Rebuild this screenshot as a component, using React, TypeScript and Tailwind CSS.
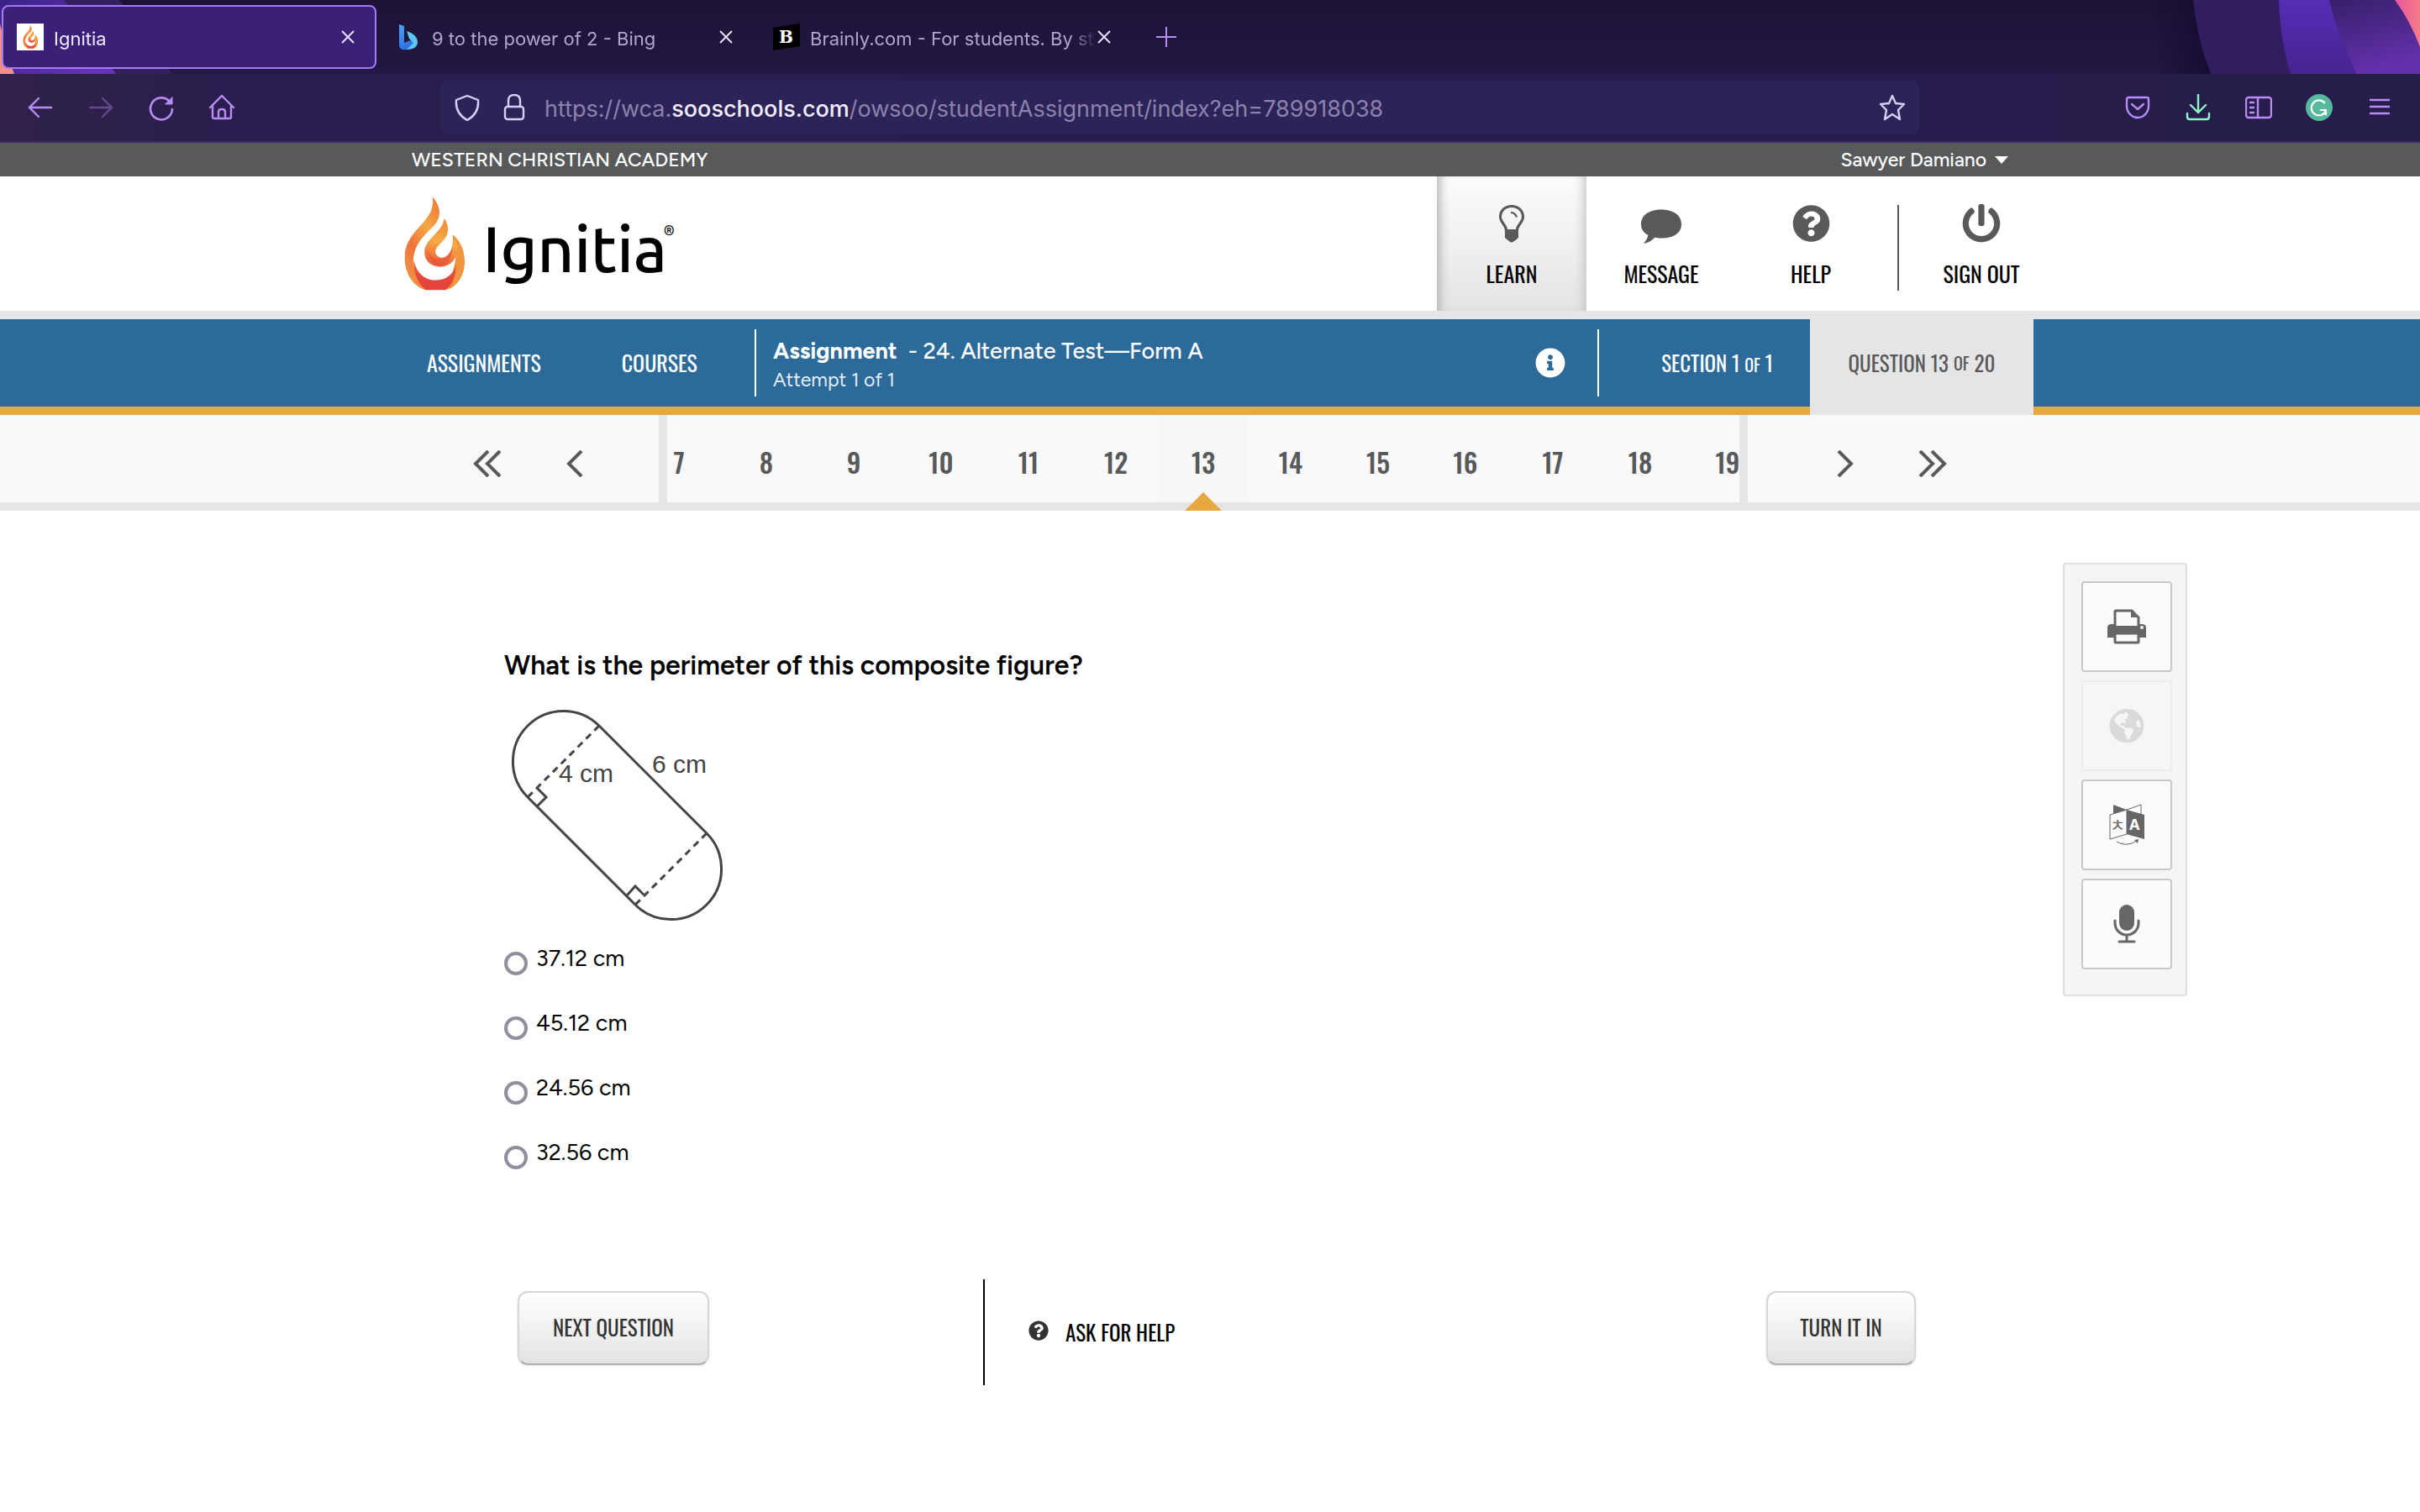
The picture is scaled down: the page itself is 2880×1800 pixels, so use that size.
import React from "react";
import { FaInfoCircle, FaPowerOff, FaQuestionCircle, FaGlobeAmericas } from "react-icons/fa";

const pages = [7, 8, 9, 10, 11, 12, 13, 14, 15, 16, 17, 18, 19];
const current = 13;
const answers = ["37.12 cm", "45.12 cm", "24.56 cm", "32.56 cm"];

function Flame({ id, className }: { id: string; className: string }) {
  return (
    <svg viewBox="30 45 222 334" className={className} aria-hidden="true">
      <defs>
        <linearGradient id={`${id}-a`} x1="0.8" y1="0" x2="0.2" y2="1">
          <stop offset="0" stopColor="#ef7f38" />
          <stop offset="0.3" stopColor="#f6a845" />
          <stop offset="0.65" stopColor="#ee743c" />
          <stop offset="1" stopColor="#f09a44" />
        </linearGradient>
        <linearGradient id={`${id}-b`} x1="0" y1="0" x2="0" y2="1">
          <stop offset="0" stopColor="#ef6c3a" />
          <stop offset="0.6" stopColor="#e6453a" />
          <stop offset="1" stopColor="#e2453f" />
        </linearGradient>
        <linearGradient id={`${id}-c`} x1="0.6" y1="0" x2="0.4" y2="1">
          <stop offset="0" stopColor="#ef8a3a" />
          <stop offset="0.5" stopColor="#f5ab45" />
          <stop offset="1" stopColor="#ea5a38" />
        </linearGradient>
      </defs>
      <path
        fill={`url(#${id}-a)`}
        d="M133 46C166 82 166 122 135 152C95 190 66 222 65 275C66 312 85 347 112 377C62 366 33 315 35 255C39 160 150 132 133 46Z"
      />
      <path fill="#f2953f" d="M205 180C238 205 251 250 247 290C242 338 212 372 175 377C205 330 214 285 216 255Z" />
      <path
        fill={`url(#${id}-b)`}
        d="M67 270C76 318 108 342 145 342C182 342 209 320 217 285C218 325 205 360 178 377L110 377C80 352 64 315 67 270Z"
      />
      <path
        fill={`url(#${id}-c)`}
        d="M175 122C198 156 190 186 165 208C146 226 140 238 146 250C152 261 166 264 178 260C198 250 209 220 205 180C216 194 224 212 222 234C218 274 192 294 160 294C128 293 105 274 105 240C106 196 170 172 175 122Z"
      />
      <path fill="#e4513a" d="M118 238C124 262 148 276 178 260C192 252 200 238 204 222C204 262 186 294 160 294C138 290 120 268 118 238Z" opacity="0.6" />
    </svg>
  );
}

function Close() {
  return (
    <svg viewBox="0 0 16 16" className="size-4" fill="none" stroke="#e6defc" strokeWidth="2" aria-hidden="true">
      <path d="M1 1L15 15M15 1L1 15" />
    </svg>
  );
}

function Chevron({ double, flip }: { double?: boolean; flip?: boolean }) {
  return (
    <svg
      viewBox={double ? "0 0 34 32" : "0 0 20 32"}
      className={`${double ? "w-[34px]" : "w-5"} h-8 ${flip ? "rotate-180" : ""}`}
      fill="none"
      stroke="#58595b"
      strokeWidth="4"
      aria-hidden="true"
    >
      <path d="M18 1L3 16L18 31" />
      {double && <path d="M32 1L17 16L32 31" />}
    </svg>
  );
}

function Tab({ title, icon, active }: { title: string; icon: React.ReactNode; active?: boolean }) {
  return (
    <div
      className={`flex h-[76px] w-[446px] items-center rounded-lg border-2 pl-4 pr-6 ${
        active ? "border-[#a47af8] bg-[#3a2077] text-[#efe8ff]" : "border-transparent text-[#b4a6cb]"
      }`}
    >
      <span className="flex size-8 shrink-0 items-center justify-center">{icon}</span>
      <a
        href="#"
        className="ml-3 flex-1 whitespace-nowrap pt-1 text-[22px] leading-8 [mask-image:linear-gradient(to_right,#000_90%,transparent)]"
      >
        {title}
      </a>
      <button aria-label="Close tab">
        <Close />
      </button>
    </div>
  );
}

function Browser() {
  return (
    <div className="bg-[#271d4b] font-['Inter',sans-serif]">
      <div className="relative h-[88px] overflow-hidden bg-gradient-to-b from-[#1d1235] to-[#241844]">
        <svg className="absolute left-0 top-0 h-[88px] w-[240px]" viewBox="0 0 240 88" aria-hidden="true">
          <defs>
            <linearGradient id="glow" x1="0" y1="0" x2="1" y2="0.6">
              <stop offset="0" stopColor="#3a2286" />
              <stop offset="1" stopColor="#6633b8" />
            </linearGradient>
          </defs>
          <path fill="#33205f" d="M0 0H142L205 88H0Z" />
          <path fill="url(#glow)" d="M0 0H76L138 88H0Z" />
          <path fill="#f58f85" d="M0 28Q8 64 17 88H0Z" />
        </svg>
        <svg className="absolute right-0 top-0 h-[88px] w-[320px]" viewBox="0 0 320 88" aria-hidden="true">
          <defs>
            <linearGradient id="shade" x1="0" y1="0" x2="1" y2="0">
              <stop offset="0" stopColor="#160c30" stopOpacity="0" />
              <stop offset="1" stopColor="#160c30" />
            </linearGradient>
            <linearGradient id="violet" x1="0" y1="0" x2="0" y2="1">
              <stop offset="0" stopColor="#552db6" />
              <stop offset="1" stopColor="#47248f" />
            </linearGradient>
            <linearGradient id="plum" x1="0" y1="0" x2="0.3" y2="1">
              <stop offset="0" stopColor="#36206a" />
              <stop offset="1" stopColor="#6430ac" />
            </linearGradient>
            <linearGradient id="pink" x1="0" y1="0" x2="1" y2="0">
              <stop offset="0" stopColor="#e8559f" />
              <stop offset="1" stopColor="#f47c86" />
            </linearGradient>
          </defs>
          <path fill="url(#shade)" d="M0 0H52L72 88H10Z" />
          <path fill="#301e60" d="M50 0Q55 48 71 88H320V0Z" />
          <path fill="url(#violet)" d="M152 0Q154 50 166 88H320V0Z" />
          <path fill="url(#plum)" d="M212 0Q222 42 245 88H320V0Z" />
          <path fill="url(#pink)" d="M290 0Q308 24 320 56V0Z" />
        </svg>
        <div className="relative flex items-center gap-1 pl-0.5 pt-1.5">
          <Tab
            active
            title="Ignitia"
            icon={
              <span className="flex size-8 items-center justify-center bg-white">
                <Flame id="fav" className="h-7" />
              </span>
            }
          />
          <Tab
            title="9 to the power of 2 - Bing"
            icon={
              <svg viewBox="0 0 22 32" className="h-8" aria-hidden="true">
                <defs>
                  <linearGradient id="bing" x1="0" y1="0" x2="0.4" y2="1">
                    <stop offset="0" stopColor="#4aa5f5" />
                    <stop offset="1" stopColor="#2f6fe0" />
                  </linearGradient>
                </defs>
                <path fill="#5cc8f2" d="M9 9C18 12 22 17 22 22C22 27 18 31 9 31L5 30L15 21L12 18Z" />
                <path fill="url(#bing)" d="M0 1L6 3V23L13 20L17 23L10 30C4 33 0 30 0 25Z" />
              </svg>
            }
          />
          <Tab
            title="Brainly.com - For students. By st"
            icon={
              <svg viewBox="0 0 32 32" className="size-8" aria-hidden="true">
                <path d="M0 5L32 0V27L0 32Z" fill="#000" />
                <text x="7" y="23" fontSize="20" fontWeight="900" fill="#fff" fontFamily="DejaVu Serif, serif">
                  B
                </text>
              </svg>
            }
          />
          <button aria-label="New tab" className="ml-6">
            <svg viewBox="0 0 24 24" className="size-6" stroke="#b98cf5" strokeWidth="2" aria-hidden="true">
              <path d="M12 0V24M0 12H24" />
            </svg>
          </button>
        </div>
      </div>

      <div className="flex h-20 items-center bg-gradient-to-r from-[#302249] via-[#281d4d] via-10% to-[#271d4b]">
        <div className="flex w-[524px] shrink-0 pl-3 [&>button]:flex [&>button]:w-[72px] [&>button]:justify-center">
          <button aria-label="Back">
            <svg viewBox="0 0 32 32" className="size-8" fill="none" stroke="#b98cf5" strokeWidth="2.4" strokeLinecap="round">
              <path d="M29 16H3M14 5L3 16L14 27" />
            </svg>
          </button>
          <button aria-label="Forward" disabled>
            <svg viewBox="0 0 32 32" className="size-8" fill="none" stroke="#64488f" strokeWidth="2.4" strokeLinecap="round">
              <path d="M3 16H29M18 5L29 16L18 27" />
            </svg>
          </button>
          <button aria-label="Reload">
            <svg viewBox="0 0 32 32" className="size-8" fill="none" stroke="#b98cf5" strokeWidth="2.6" strokeLinecap="round">
              <path d="M29 18A13 13 0 1 1 25 8" />
              <path d="M29 4V12H21Z" fill="#b98cf5" strokeWidth="1" />
            </svg>
          </button>
          <button aria-label="Home">
            <svg viewBox="0 0 32 32" className="size-8" fill="none" stroke="#b98cf5" strokeWidth="2.4" strokeLinejoin="round" strokeLinecap="round">
              <path d="M2 16L16 2L30 16M5 14V27Q5 29 7 29H25Q27 29 27 27V14M12 29V21Q12 18 16 18T20 21V29" />
            </svg>
          </button>
        </div>
        <div className="flex h-16 min-w-0 flex-1 items-center rounded-lg bg-[#2c2458] px-4">
          <svg viewBox="0 0 32 32" className="size-8" fill="none" stroke="#d9cff5" strokeWidth="2.4" strokeLinejoin="round">
            <path d="M16 2L29 7C30 18 25 26 16 31C7 26 2 18 3 7Z" />
          </svg>
          <svg viewBox="0 0 32 32" className="ml-6 size-8" fill="none" stroke="#d9cff5" strokeWidth="2.4">
            <rect x="5" y="15" width="22" height="15" rx="3" />
            <path d="M9 15V8Q9 1 16 1T23 8V15" />
          </svg>
          <div role="textbox" aria-label="Address" className="ml-5 flex-1 whitespace-nowrap pt-1 text-[27px] leading-9 text-[#8d81ad]">
            https://wca.<span className="font-medium text-[#f3eeff]">sooschools.com</span>
            /owsoo/studentAssignment/index?eh=789918038
          </div>
          <button aria-label="Bookmark this page">
            <svg viewBox="0 0 32 32" className="size-8" fill="none" stroke="#d9cff5" strokeWidth="2.4" strokeLinejoin="round">
              <path d="M16 2L20 11L30 12L23 19L25 30L16 24L7 30L9 19L2 12L12 11Z" />
            </svg>
          </button>
        </div>
        <div className="flex w-[596px] shrink-0 justify-end pr-3 [&>button]:flex [&>button]:w-[72px] [&>button]:justify-center">
          <button aria-label="Pocket">
            <svg viewBox="0 0 32 32" className="size-8" fill="none" stroke="#b98cf5" strokeWidth="2.4" strokeLinecap="round" strokeLinejoin="round">
              <path d="M5 4H27Q29 4 29 6V14C29 22 23 28 16 28S3 22 3 14V6Q3 4 5 4ZM9 12L16 18L23 12" />
            </svg>
          </button>
          <button aria-label="Downloads">
            <svg viewBox="0 0 32 32" className="size-8" fill="none" stroke="#8df5c6" strokeWidth="2.4" strokeLinecap="round" strokeLinejoin="round">
              <path d="M16 1V22M7 13L16 22L25 13M3 23V27Q3 30 6 30H26Q29 30 29 27V23" />
            </svg>
          </button>
          <button aria-label="Sidebars">
            <svg viewBox="0 0 32 32" className="size-8" fill="none" stroke="#b98cf5" strokeWidth="2.4">
              <rect x="1" y="4" width="30" height="24" rx="3" />
              <path d="M15 4V28M5 10H11M5 16H11M5 22H11" />
            </svg>
          </button>
          <button aria-label="Grammarly">
            <svg viewBox="0 0 32 32" className="size-8" fill="none" stroke="#fff" strokeWidth="2.2">
              <circle cx="16" cy="16" r="16" fill="#56b99b" stroke="none" />
              <path d="M23 11A9 9 0 1 0 24 20M17 19H24V25" />
            </svg>
          </button>
          <button aria-label="Menu">
            <svg viewBox="0 0 32 32" className="size-8" stroke="#b98cf5" strokeWidth="2.4" strokeLinecap="round">
              <path d="M5 7H27M5 15H27M5 23H27" />
            </svg>
          </button>
        </div>
      </div>
      <div className="h-0.5 bg-[#3c2c68]"></div>
    </div>
  );
}

function PrintIcon() {
  return (
    <svg viewBox="0 0 46 42" className="w-[46px]" aria-hidden="true">
      <path fill="#666" d="M0 22Q0 18 5 18H41Q46 18 46 22V34H0Z" />
      <path fill="#fbfbfb" stroke="#666" strokeWidth="3" d="M9 22V3Q9 2 10 2H29L37 10V22ZM9 29H37V39Q37 40 36 40H10Q9 40 9 39Z" />
      <path fill="#666" d="M28 2V10H38L30 2ZM8 20H38V30H8Z" />
      <circle cx="41" cy="22" r="2" fill="#fff" />
    </svg>
  );
}

function TranslateIcon() {
  return (
    <svg viewBox="0 0 42 50" className="w-[42px]" aria-hidden="true">
      <path fill="#666" d="M5 1L21 7L5 12Z" />
      <path fill="#fbfbfb" stroke="#666" d="M21 7L38 1V12M21 7L1 13V42L21 36Z" />
      <path fill="#666" d="M21 7L42 13V42L21 36Z" />
      <text x="1" y="33" fontSize="20" fill="#666" fontFamily="Noto Sans CJK KR, sans-serif">
        ㅊ
      </text>
      <text x="24" y="31" fontSize="18" fontWeight="700" fill="#fff" fontFamily="Noto Sans, sans-serif">
        A
      </text>
      <path fill="none" stroke="#666" d="M9 45Q21 52 33 44" />
      <path fill="#666" d="M30 43L35 42L34 47Z" />
    </svg>
  );
}

function MicIcon() {
  return (
    <svg viewBox="0 0 32 46" className="w-8" fill="none" stroke="#666" strokeWidth="3" strokeLinecap="round" aria-hidden="true">
      <rect x="7" y="0" width="18" height="31" rx="9" fill="#666" stroke="none" />
      <path d="M2 19V22A14 14 0 0 0 30 22V19M16 36V44M7 44H25" />
    </svg>
  );
}

function Figure() {
  return (
    <svg viewBox="600 840 260 260" className="mt-7 size-[260px]" fill="none" stroke="#444" strokeWidth="3">
      <title>Rectangle 4 cm by 6 cm with a half circle on each end</title>
      <path d="M713 864L841 992A60 60 0 0 1 756 1077L628 949A60 60 0 0 1 713 864Z" />
      <path d="M713 864L628 949M841 992L756 1077" strokeDasharray="8 6" />
      <path d="M639 938L650 949L639 960M746 1066L756 1055L766 1065" />
      <g fill="#444" stroke="none" fontSize="30" fontFamily="Liberation Sans, Arial, sans-serif">
        <text x="665" y="931">4 cm</text>
        <text x="776" y="920">6 cm</text>
      </g>
    </svg>
  );
}

export default function App() {
  return (
    <div className="min-h-screen bg-white font-['Figtree','Lato',sans-serif] text-black">
      <Browser />

      <div className="bg-[#58595b] text-[23px] font-medium leading-10 text-white">
        <div className="mx-auto flex max-w-[1960px] justify-between px-[30px]">
          <span>WESTERN CHRISTIAN ACADEMY</span>
          <button className="flex items-center gap-2.5">
            Sawyer Damiano
            <svg viewBox="0 0 16 9" className="w-4" fill="#fff" aria-hidden="true">
              <path d="M0 0H16L8 9Z" />
            </svg>
          </button>
        </div>
      </div>

      <header className="border-b-10 border-[#e5e6e7]">
        <div className="mx-auto flex h-40 max-w-[1960px] font-['Oswald','Roboto_Condensed',sans-serif] text-[26px] leading-8">
          <a href="#" aria-label="Ignitia home" className="flex items-start pl-5 pt-6 font-['Ubuntu','Noto_Sans',sans-serif]">
            <Flame id="logo" className="h-28" />
            <span className="ml-5 mt-4 text-[76px] font-medium leading-[92px]">Ignitia</span>
            <span className="-ml-1 mt-6 text-base font-medium leading-8">®</span>
          </a>
          <nav className="ml-auto flex items-start [&>a]:flex [&>a]:h-40 [&>a]:flex-col [&>a]:items-center [&>a]:pt-8 [&_svg]:h-12 [&_svg]:fill-[#58595b]">
            <a
              href="#"
              className="w-[178px] bg-gradient-to-b from-[#fcfcfc] to-[#e4e4e4] shadow-[inset_12px_0_12px_-8px_#b5b5b5,inset_-12px_0_12px_-8px_#c8c8c8]"
            >
              <svg viewBox="0 0 30 48" aria-hidden="true">
                <path
                  fillRule="evenodd"
                  d="M15 2C24 2 30 8 30 16C30 23 23 27 23 33H7C7 27 0 23 0 16C0 8 6 2 15 2ZM15 5C8 5 3 10 3 16C3 21 10 26 10 31H20C20 26 27 21 27 16C27 10 22 5 15 5Z"
                />
                <path d="M14 10Q20 10 22 16L20 17Q18 12 14 12ZM7 31H23V41Q20 44 18 45Q15 48 12 45Q10 44 7 41Z" />
              </svg>
              <span className="mt-5">LEARN</span>
            </a>
            <a href="#" className="w-[178px]">
              <svg viewBox="0 0 52 52" aria-hidden="true">
                <path d="M26 8C41 8 52 15 52 27S41 45 26 45C23 45 20 45 18 44C14 48 10 51 4 52C3 51 8 48 9 41C3 38 0 33 0 27C0 15 11 8 26 8Z" />
              </svg>
              <span className="mt-5">MESSAGE</span>
            </a>
            <a href="#" className="w-[178px]">
              <FaQuestionCircle className="w-[45px]" />
              <span className="mt-5">HELP</span>
            </a>
            <span className="ml-3.5 mt-[34px] h-[102px] w-0.5 bg-[#58595b]"></span>
            <a href="#" className="w-40 pl-9">
              <FaPowerOff className="w-[46px]" />
              <span className="mt-5">SIGN OUT</span>
            </a>
          </nav>
        </div>
      </header>

      <div className="border-b-10 border-[#e8a840] bg-[#2c6a99] text-white">
        <div className="mx-auto flex h-[104px] max-w-[1960px] items-center font-['Oswald','Roboto_Condensed',sans-serif] text-[26px] leading-8">
          <nav className="flex gap-24 pl-12">
            <a href="#">ASSIGNMENTS</a>
            <a href="#">COURSES</a>
          </nav>
          <span className="ml-[68px] h-20 w-0.5 bg-white"></span>
          <div className="ml-5 pt-1 font-['Figtree','Lato',sans-serif]">
            <p className="whitespace-pre text-[27px] font-medium leading-9">
              <b className="font-bold">Assignment</b>
              {"  - 24. Alternate Test—Form A"}
            </p>
            <p className="text-[23px] leading-8 text-[#e3eef6]">Attempt 1 of 1</p>
          </div>
          <button aria-label="Assignment info" className="ml-auto">
            <FaInfoCircle className="size-9" />
          </button>
          <span className="ml-[38px] h-20 w-0.5 bg-white"></span>
          <a href="#" className="ml-[74px] mr-11 text-[25px]">
            SECTION 1 <span className="text-xl">OF</span> 1
          </a>
          <a href="#" className="-mb-2.5 flex h-[114px] w-[266px] items-center justify-center gap-1.5 self-start bg-[#e5e5e5] pb-2.5 text-[25px] text-[#58595b]">
            QUESTION 13 <span className="text-xl">OF</span> 20
          </a>
        </div>
      </div>

      <div className="border-b-10 border-[#e5e5e5] bg-[#f9f9f9]">
        <div className="mx-auto flex h-[104px] max-w-[1960px]">
          <div className="flex flex-1 justify-end pr-12 [&>button]:flex [&>button]:w-[104px] [&>button]:items-center [&>button]:justify-center [&>button]:pt-3">
            <button aria-label="First question">
              <Chevron double />
            </button>
            <button aria-label="Previous question">
              <Chevron />
            </button>
          </div>
          <ul className="-mb-2.5 flex h-[114px] w-[1296px] justify-center overflow-hidden border-x-10 border-[#e5e5e5] font-['Oswald','Roboto_Condensed',sans-serif] text-[32px] font-medium leading-10 text-[#58595b]">
            {pages.map((n) => (
              <li key={n} className="relative w-[104px] shrink-0">
                <a href="#" className={`flex h-[104px] items-center justify-center pt-2 ${n === current ? "bg-[#f7f7f7]" : ""}`}>
                  {n}
                </a>
                {n === current && (
                  <svg viewBox="0 0 44 22" className="absolute bottom-0 left-[30px] w-11" fill="#e8a840" aria-hidden="true">
                    <path d="M22 0L44 22H0Z" />
                  </svg>
                )}
              </li>
            ))}
          </ul>
          <div className="flex flex-1 pl-16 [&>button]:flex [&>button]:w-[104px] [&>button]:items-center [&>button]:justify-center [&>button]:pt-3">
            <button aria-label="Next question">
              <Chevron flip />
            </button>
            <button aria-label="Last question">
              <Chevron double flip />
            </button>
          </div>
        </div>
      </div>

      <div className="grid grid-cols-[1fr_minmax(0,1960px)_1fr] items-start">
        <main className="col-start-2 px-[140px] pt-[164px]">
          <h1 className="text-[32px] font-semibold leading-10">What is the perimeter of this composite figure?</h1>
          <Figure />
          <ul className="mt-1.5 text-[27px] leading-9">
            {answers.map((answer, i) => (
              <li key={answer} className="flex h-[77px] items-center">
                <input
                  type="radio"
                  name="answer"
                  id={`answer-${i}`}
                  className="mt-1 size-7 appearance-none rounded-full border-4 border-[#8f8f9d] bg-white"
                />
                <label htmlFor={`answer-${i}`} className="pb-2 pl-2.5">
                  {answer}
                </label>
              </li>
            ))}
          </ul>
          <div className="mt-[109px] flex h-[126px] items-center font-['Oswald','Roboto_Condensed',sans-serif] text-[25px] leading-8">
            <button className="mb-2.5 ml-4 h-[88px] w-[228px] rounded-xl border-2 border-[#d6d6d6] border-b-[#b0b0b0] bg-gradient-to-b from-white to-[#e3e3e3] pb-0.5 text-[#333] shadow-sm">
              NEXT QUESTION
            </button>
            <span className="ml-[326px] h-full w-0.5 bg-black"></span>
            <a href="#" className="ml-[52px] flex items-center gap-5">
              <FaQuestionCircle className="mb-1 size-6 text-[#333]" />
              ASK FOR HELP
            </a>
            <button className="mb-2.5 ml-auto h-[88px] w-[178px] rounded-xl border-2 border-[#d6d6d6] border-b-[#b0b0b0] bg-gradient-to-b from-white to-[#e3e3e3] pb-0.5 text-[#333] shadow-sm">
              TURN IT IN
            </button>
          </div>
        </main>

        <aside className="ml-[35px] mt-[62px] flex w-[148px] flex-col items-center gap-2.5 rounded border-2 border-[#dfdfdf] bg-[#f4f5f5] pb-[30px] pl-1 pt-5 [&>button]:flex [&>button]:size-[108px] [&>button]:items-center [&>button]:justify-center [&>button]:rounded [&>button]:border-2 [&>button]:border-[#c8c8c8] [&>button]:bg-[#fbfbfb] [&>button:disabled]:border-[#ebeded] [&>button:disabled]:bg-[#f5f7f6]">
          <button aria-label="Print">
            <PrintIcon />
          </button>
          <button aria-label="Web" disabled>
            <FaGlobeAmericas className="size-[42px] text-[#dadada]" />
          </button>
          <button aria-label="Translate">
            <TranslateIcon />
          </button>
          <button aria-label="Read aloud">
            <MicIcon />
          </button>
        </aside>
      </div>
    </div>
  );
}
